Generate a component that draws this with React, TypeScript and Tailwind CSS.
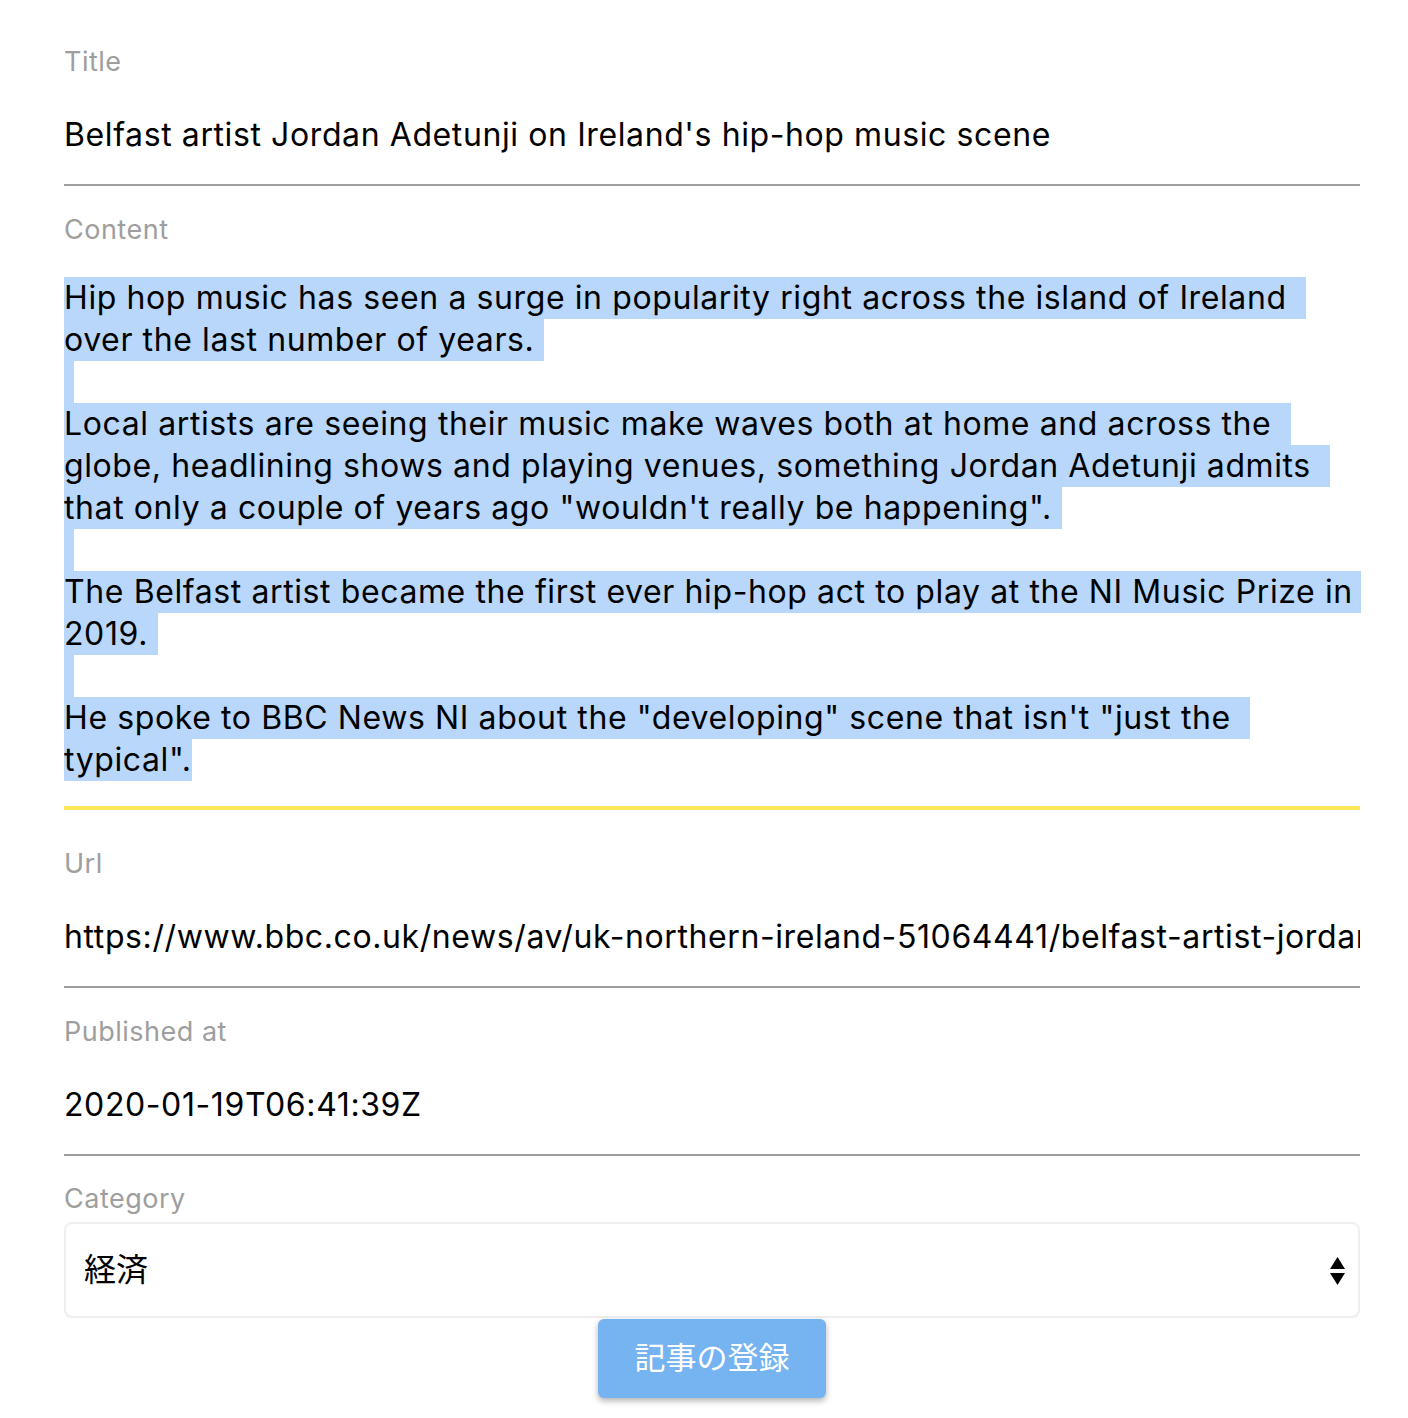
const sel = 'bg-[#b9d7fb]';

const contentLines: { text: string; pad: number; empty?: boolean }[] = [
  { text: 'Hip hop music has seen a surge in popularity right across the island of Ireland ', pad: 10 },
  { text: 'over the last number of years.', pad: 10 },
  { text: '', pad: 10, empty: true },
  { text: 'Local artists are seeing their music make waves both at home and across the ', pad: 10 },
  { text: 'globe, headlining shows and playing venues, something Jordan Adetunji admits ', pad: 10 },
  { text: 'that only a couple of years ago "wouldn\'t really be happening".', pad: 10 },
  { text: '', pad: 10, empty: true },
  { text: 'The Belfast artist became the first ever hip-hop act to play at the NI Music Prize in', pad: 8 },
  { text: '2019.', pad: 10 },
  { text: '', pad: 10, empty: true },
  { text: 'He spoke to BBC News NI about the "developing" scene that isn\'t "just the ', pad: 10 },
  { text: 'typical".', pad: 0 },
];

function Label({ children }: { children: string }) {
  return <div className="text-[27px] leading-[34px] tracking-[0.5px] text-[#9e9e9e]">{children}</div>;
}

function TextField({ label, value, top }: { label: string; value: string; top: string }) {
  return (
    <div className={top}>
      <Label>{label}</Label>
      <div className="h-[107px] pt-[6px] flex items-center overflow-hidden whitespace-nowrap text-[32px] tracking-[0.6px] text-black border-b-2 border-[#9e9e9e]">
        {value}
      </div>
    </div>
  );
}

export default function App() {
  return (
    <div
      className="w-[1408px] h-[1418px] bg-white pl-[64px] pr-[48px] overflow-hidden"
      style={{ fontFamily: 'Inter, "Noto Sans CJK JP", sans-serif' }}
    >
      <TextField top="pt-[45px]" label="Title" value="Belfast artist Jordan Adetunji on Ireland's hip-hop music scene" />

      <div className="pt-[27px]">
        <Label>Content</Label>
        <div className="pt-[30px] pb-[25px] border-b-4 border-[#ffe95b]">
          {contentLines.map((l, i) => (
            <div key={i} className="h-[42px] text-[32px] leading-[42px] tracking-[0.6px] text-black whitespace-pre">
              {l.empty ? (
                <span className={`inline-block w-[10px] h-[42px] align-top ${sel}`} />
              ) : (
                <span className={`inline-block h-[42px] ${sel}`} style={{ paddingRight: l.pad }}>
                  {l.text}
                </span>
              )}
            </div>
          ))}
        </div>
      </div>

      <TextField
        top="pt-[37px]"
        label="Url"
        value="https://www.bbc.co.uk/news/av/uk-northern-ireland-51064441/belfast-artist-jordan-adetunji-on-ireland-s-hip-hop-music-scene"
      />
      <TextField top="pt-[27px]" label="Published at" value="2020-01-19T06:41:39Z" />

      <div className="pt-[26px]">
        <Label>Category</Label>
        <div className="mt-[6px] h-[96px] rounded-[8px] border-2 border-[#efefef] flex items-center justify-between pl-[18px] pr-[12px]">
          <span className="text-[32px] text-black">経済</span>
          <svg width="17" height="32" viewBox="0 0 17 32" className="mt-[2px]">
            <polygon points="8.5,2 16,14 1,14" fill="#000" />
            <polygon points="1,18 16,18 8.5,30" fill="#000" />
          </svg>
        </div>
      </div>

      <div className="flex justify-center">
        <button className="w-[228px] h-[79px] mt-[1px] rounded-[6px] bg-[#75b3f1] text-white text-[31px] shadow-[0_3px_6px_rgba(0,0,0,0.3)]">
          記事の登録
        </button>
      </div>
    </div>
  );
}
